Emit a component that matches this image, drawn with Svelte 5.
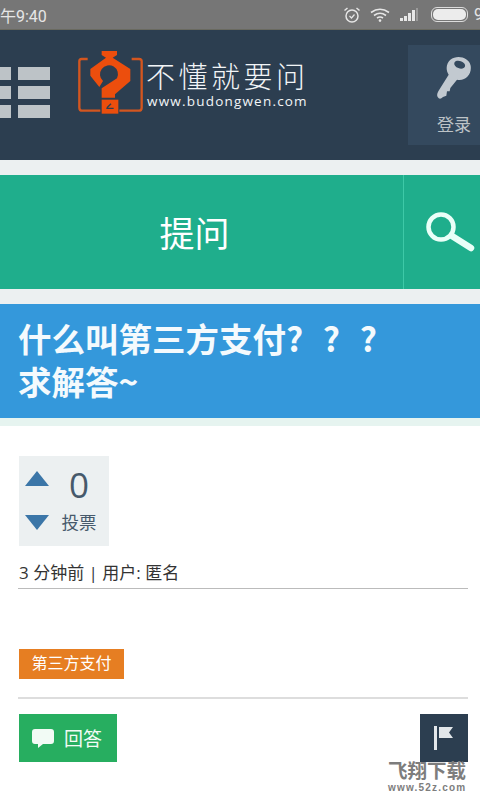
<script>
  const grid = [0, 1, 2];
</script>

<div class="page">
  <div class="status">
    <span class="time">下午9:40</span>
    <div class="status-icons">
      <svg width="18" height="18" viewBox="0 0 18 18" fill="none" stroke="#e6e6e6" stroke-width="1.5">
        <circle cx="9" cy="10" r="6" />
        <path d="M6.5 10l2 2 3-3.5" stroke-width="1.2" />
        <path d="M1.5 4.5L4.5 2M16.5 4.5L13.5 2" />
      </svg>
      <svg width="20" height="16" viewBox="0 0 20 16" fill="none" stroke="#e6e6e6" stroke-width="1.6">
        <path d="M1 5.5Q10-1 19 5.5" />
        <path d="M4 8.5Q10 4 16 8.5" />
        <path d="M7 11Q10 9 13 11" />
        <circle cx="10" cy="13.6" r="1.3" fill="#e6e6e6" stroke="none" />
      </svg>
      <svg class="signal" width="20" height="14" viewBox="0 0 20 14">
        <rect x="0" y="10" width="3" height="3" fill="#e6e6e6" />
        <rect x="4" y="8" width="3" height="5" fill="#e6e6e6" />
        <rect x="8" y="5" width="3" height="8" fill="#e6e6e6" />
        <rect x="12" y="2" width="3" height="11" fill="#e6e6e6" />
        <rect x="16" y="0" width="2" height="13" fill="#9a9a9a" />
      </svg>
      <div class="battery"><div class="battery-fill"></div></div>
      <span class="pct">98</span>
    </div>
  </div>

  <header class="topbar">
    <div class="menu">
      {#each grid as row (row)}
        <div class="menu-row"><i class="cell-a"></i><i class="cell-b"></i></div>
      {/each}
    </div>
    <div class="logo">
      <svg class="logo-mark" width="80" height="75" viewBox="0 0 240 225">
        <path d="M50 42H32Q25 42 25 49V188Q25 197 34 197H88M182 42H204Q212 42 212 49V188Q212 197 203 197H145" fill="none" stroke="#d4561f" stroke-width="7" />
        <path fill="#ec4e0d" d="M92 18H138V30L125 38L178 72V108L132 148V158H92V130L138 100A27 27 0 1 0 96 108L85 126L58 92V72L105 38L92 30Z" />
        <path fill="#ec4e0d" d="M92 164H142V206H92Z" />
        <path d="M106 190H128M120 176L108 188" stroke="#2c3e50" stroke-width="4" fill="none" />
      </svg>
      <div class="logo-text">
        <div class="logo-cn">不懂就要问</div>
        <div class="logo-url">www.budongwen.com</div>
      </div>
    </div>
    <div class="login">
      <svg width="34" height="42" viewBox="110 52 102 126">
        <path fill="#c2c9d0" d="M150 60C170 45 205 52 211 78C215 105 195 125 170 120L150 145L148 155L140 155L138 168L128 172Q118 182 112 172Q108 165 114 155L145 105C135 90 138 70 150 60Z" />
        <ellipse cx="178" cy="75" rx="17" ry="11" transform="rotate(20 178 75)" fill="#34495e" />
      </svg>
      <span>登录</span>
    </div>
  </header>

  <div class="gap"></div>

  <nav class="actions">
    <div class="ask">提问</div>
    <div class="search">
      <svg width="50" height="42" viewBox="0 0 50 42" fill="none" stroke="#eafff8" stroke-linecap="round">
        <circle cx="16" cy="16" r="12.5" stroke-width="4.5" />
        <path d="M27 25L46 37" stroke-width="6.5" />
      </svg>
    </div>
  </nav>

  <div class="gap"></div>

  <h1 class="title">什么叫第三方支付? ? ?<br />求解答~</h1>
  <div class="title-edge"></div>

  <main class="content">
    <div class="votes">
      <div class="arrows">
        <i class="up"></i>
        <i class="down"></i>
      </div>
      <div class="count">
        <b>0</b>
        <span>投票</span>
      </div>
    </div>
    <p class="meta">3 分钟前 | 用户: 匿名</p>
    <div class="rule"></div>
    <span class="tag">第三方支付</span>
    <div class="rule light"></div>
    <div class="buttons">
      <div class="answer">
        <svg width="22" height="20" viewBox="0 0 22 20">
          <path fill="#f2fbf5" d="M3 0H19Q22 0 22 3V12Q22 15 19 15H11L6 19V15H3Q0 15 0 12V3Q0 0 3 0Z" />
        </svg>
        <span>回答</span>
      </div>
      <div class="flag">
        <svg width="20" height="24" viewBox="0 0 20 24">
          <rect x="0" y="0" width="3" height="24" fill="#e3e7ea" />
          <path fill="#e3e7ea" d="M5 1H19L15 6.5L19 12H5Z" />
        </svg>
      </div>
    </div>
  </main>

  <div class="watermark">
    <div class="wm-cn">飞翔下载</div>
    <div class="wm-url">www.52z.com</div>
  </div>
</div>

<style>
  :global(body) {
    margin: 0;
    background: #fff;
  }

  .page {
    position: relative;
    width: 480px;
    height: 800px;
    overflow: hidden;
    font-family: "Open Sans", "Noto Sans CJK SC", sans-serif;
  }

  .status {
    height: 30px;
    box-sizing: border-box;
    background: #767676;
    border-bottom: 1px solid #6a6a60;
    display: flex;
    align-items: center;
    justify-content: space-between;
    color: #e6e6e6;
    font-family: Roboto, "Noto Sans CJK SC", sans-serif;
    font-size: 16px;
  }

  .time {
    margin-left: -16px;
  }

  .status-icons {
    display: flex;
    align-items: center;
    gap: 9px;
    margin-right: -12px;
  }

  .signal {
    margin-left: 1px;
  }

  .battery {
    width: 33px;
    height: 11px;
    border: 1px solid #dcdcdc;
    border-radius: 6px;
    padding: 1px;
    box-sizing: content-box;
    margin-left: 2px;
  }

  .battery-fill {
    height: 100%;
    background: #ececec;
    border-radius: 5px;
  }

  .pct {
    margin-left: -3px;
    width: 18px;
  }

  .topbar {
    height: 130px;
    background: #2c3e50;
    display: flex;
    align-items: flex-start;
  }

  .menu {
    display: flex;
    flex-direction: column;
    gap: 6px;
    margin-left: -20px;
    margin-top: 37px;
  }

  .menu-row {
    display: flex;
    gap: 7px;
  }

  .menu-row i {
    display: block;
    height: 13px;
    background: #bdc3c7;
  }

  .cell-a {
    width: 31px;
  }

  .cell-b {
    width: 32px;
  }

  .logo {
    display: flex;
    align-items: flex-start;
    margin-left: 21px;
    margin-top: 15px;
  }

  .logo-text {
    margin-left: -5px;
    margin-top: 12px;
    color: #f2f5f7;
  }

  .logo-cn {
    font-size: 29px;
    line-height: 36px;
    font-weight: 300;
    font-family: "Noto Sans CJK SC", sans-serif;
    letter-spacing: 3.5px;
    white-space: nowrap;
  }

  .logo-url {
    font-size: 13.5px;
    line-height: 16px;
    letter-spacing: 1.2px;
    white-space: nowrap;
    font-family: "Open Sans", sans-serif;
    margin-left: 1px;
  }

  .login {
    margin-left: auto;
    margin-right: -20px;
    margin-top: 15px;
    width: 92px;
    height: 100px;
    flex: none;
    background: #34495e;
    display: flex;
    flex-direction: column;
    align-items: center;
    color: #bdc3c7;
    font-size: 17px;
  }

  .login svg {
    margin-top: 12px;
    margin-bottom: 12px;
  }

  .gap {
    height: 15px;
    background: #ecf0f1;
  }

  .actions {
    height: 114px;
    display: flex;
    background: #1fae8c;
  }

  .ask {
    flex: 1;
    display: flex;
    align-items: center;
    justify-content: center;
    color: #fff;
    font-size: 35px;
    font-family: "Noto Sans CJK SC", sans-serif;
    margin-top: -2px;
    margin-right: 14px;
  }

  .search {
    width: 77px;
    border-left: 1px solid #3ec9a7;
    display: flex;
    align-items: center;
    justify-content: flex-end;
    padding-right: 5px;
    box-sizing: border-box;
  }

  .title {
    margin: 0;
    height: 114px;
    box-sizing: border-box;
    background: #3498db;
    color: #f4fafd;
    font-size: 33.5px;
    line-height: 43px;
    font-weight: 700;
    word-spacing: 12px;
    padding: 12px 0 0 18px;
    font-family: "Noto Sans CJK SC", sans-serif;
  }

  .title-edge {
    height: 8px;
    background: #e6f4f0;
  }

  .content {
    padding: 30px 12px 0 19px;
  }

  .votes {
    width: 90px;
    height: 90px;
    background: #ecf0f1;
    display: flex;
  }

  .arrows {
    width: 30px;
    display: flex;
    flex-direction: column;
    align-items: flex-end;
    padding-top: 15px;
    gap: 29px;
  }

  .arrows i {
    display: block;
    width: 0;
    height: 0;
    border-left: 12px solid transparent;
    border-right: 12px solid transparent;
  }

  .up {
    border-bottom: 15px solid #3b76a8;
  }

  .down {
    border-top: 15px solid #3b76a8;
  }

  .count {
    flex: 1;
    display: flex;
    flex-direction: column;
    align-items: center;
    color: #46596b;
  }

  .count b {
    font-size: 35px;
    font-weight: 400;
    line-height: 40px;
    margin-top: 9px;
  }

  .count span {
    font-size: 17.5px;
    line-height: 24px;
    margin-top: 5px;
  }

  .meta {
    margin: 15px 0 0;
    font-size: 17px;
    line-height: 24px;
    color: #333;
  }

  .rule {
    height: 1px;
    background: #bbb;
    margin-top: 3px;
    margin-bottom: 60px;
    margin-left: -1px;
  }

  .rule.light {
    height: 2px;
    background: #ddd;
    margin-top: 18px;
    margin-bottom: 15px;
  }

  .tag {
    display: block;
    width: 105px;
    height: 30px;
    line-height: 28px;
    text-align: center;
    background: #e67e22;
    color: #fff;
    font-size: 16px;
  }

  .buttons {
    display: flex;
    justify-content: space-between;
    align-items: flex-start;
  }

  .answer {
    width: 98px;
    height: 48px;
    background: #27ae60;
    color: #f2fbf5;
    display: flex;
    align-items: center;
    gap: 10px;
    padding-left: 13px;
    box-sizing: border-box;
    font-size: 19px;
  }

  .answer svg {
    margin-top: 1px;
  }

  .flag {
    width: 48px;
    height: 48px;
    background: #2c3e50;
    display: flex;
    align-items: center;
    justify-content: center;
  }

  .watermark {
    position: absolute;
    left: 388px;
    top: 759px;
    width: 78px;
    color: #7d7d7d;
    text-align: center;
  }

  .wm-cn {
    font-size: 19.5px;
    line-height: 22px;
    font-weight: 700;
    font-family: "Noto Sans CJK SC", sans-serif;
    white-space: nowrap;
  }

  .wm-url {
    font-size: 10px;
    line-height: 14px;
    letter-spacing: 1.2px;
    font-weight: 600;
    font-family: "Liberation Sans", sans-serif;
    white-space: nowrap;
  }
</style>
